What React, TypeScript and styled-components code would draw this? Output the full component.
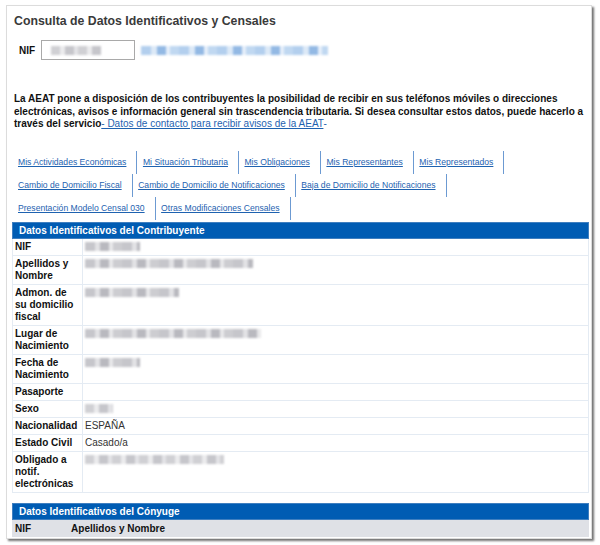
import React from 'react';
import styled, {createGlobalStyle} from 'styled-components';

const GlobalStyle = createGlobalStyle`
    html, body {
        margin: 0;
        padding: 0;
        background: #ffffff;
    }
    body {
        font-family: "Liberation Sans", Arial, sans-serif;
        color: #222222;
    }
`;

const Page = styled.div`
    padding: 5px 8px 5px 6px;
`;

const Panel = styled.div`
    height: 534px;
    box-sizing: border-box;
    background: #ffffff;
    border: 1px solid #dcdcdc;
    box-shadow: 2px 2px 2px rgba(0, 0, 0, 0.55);
    padding: 7px 2px 0 5px;
    overflow: hidden;
`;

const Title = styled.h1`
    margin: 0 0 0 2px;
    font-size: 12.3px;
    line-height: 16px;
    font-weight: 700;
    color: #3a3a3a;
`;

const NifRow = styled.div`
    display: flex;
    align-items: center;
    gap: 6px;
    margin: 11px 0 0 7px;
    height: 20px;
`;

const Label = styled.span`
    font-size: 10px;
    font-weight: 700;
    color: #111111;
`;

const Input = styled.div`
    width: 94px;
    height: 20px;
    border: 1px solid #a9a9a9;
    display: flex;
    align-items: center;
    padding-left: 9px;
    box-sizing: border-box;
`;

// pixelated stand-in for personal data that is hidden on screen
const Blur = styled.span<{$w: number; $tone?: 'grey' | 'blue' | 'light'}>`
    display: inline-block;
    width: ${(p) => p.$w}px;
    height: 9px;
    vertical-align: middle;
    filter: blur(1.3px);
    background: ${(p) => {
        if (p.$tone === 'blue') {
            return 'repeating-linear-gradient(90deg, #b3cfee 0 10px, #dce9f7 10px 16px, #93b9e4 16px 25px, #e6effa 25px 29px, #c0d8f1 29px 38px)';
        }
        if (p.$tone === 'light') {
            return 'repeating-linear-gradient(90deg, #d0d0d4 0 9px, #ebebed 9px 14px, #c6c6cb 14px 23px, #e4e4e7 23px 27px)';
        }
        return 'repeating-linear-gradient(90deg, #c6c6cb 0 10px, #e2e2e5 10px 15px, #b9b9bf 15px 24px, #e8e8ea 24px 28px, #cdcdd1 28px 37px)';
    }};
`;

const Notice = styled.p`
    margin: 33px 4px 0 2px;
    font-size: 10px;
    line-height: 12.5px;
    font-weight: 700;
    color: #111111;
`;

const NoticeLink = styled.a`
    font-weight: 400;
    color: #1e62b0;
`;

const Nav = styled.div`
    display: flex;
    flex-wrap: wrap;
    margin: 20px 0 0 6px;
    width: 540px;
`;

const NavBreak = styled.div`
    flex-basis: 100%;
    height: 0;
`;

const NavLink = styled.a<{$first?: boolean}>`
    display: flex;
    align-items: center;
    height: 23px;
    padding: 0 10px 0 ${(p) => (p.$first ? '0' : '5.5px')};
    border-right: 1px solid #6c9ad2;
    font-size: 8.6px;
    color: #1e62b0;
    text-decoration: underline;
    white-space: nowrap;
`;

const Section = styled.div`
    margin-top: 2px;
    width: 577px;
`;

const Header = styled.div`
    background: #005cb3;
    color: #ffffff;
    font-size: 10px;
    font-weight: 700;
    height: 17px;
    line-height: 15px;
    padding-left: 6px;
    border: 1px solid #3f7fc0;
    box-sizing: border-box;
`;

const Table = styled.div`
    display: grid;
    grid-template-columns: 70px 1fr;
    border-left: 1px solid #e4ebf3;
    border-right: 1px solid #e4ebf3;
`;

const Cell = styled.div<{$label?: boolean}>`
    font-size: 10px;
    line-height: 12px;
    padding: 2px;
    font-weight: ${(p) => (p.$label ? 700 : 400)};
    color: ${(p) => (p.$label ? '#111111' : '#333333')};
    border-bottom: 1px solid #e4ebf3;
    border-right: ${(p) => (p.$label ? '1px solid #e4ebf3' : 'none')};
    min-height: 12px;
`;

const SpouseSection = styled(Section)`
    margin-top: 10px;
`;

const SubHead = styled.div`
    display: flex;
    gap: 40px;
    background: #dfe1e6;
    height: 17px;
    align-items: center;
    padding-left: 3px;
    font-size: 10px;
    font-weight: 700;
    color: #111111;
`;

type Row = {
    label: string[];
    value?: string;
    blur?: number;
    tone?: 'grey' | 'light';
};

const rows: Row[] = [
    {label: ['NIF'], blur: 55},
    {label: ['Apellidos y', 'Nombre'], blur: 168},
    {label: ['Admon. de', 'su domicilio', 'fiscal'], blur: 94},
    {label: ['Lugar de', 'Nacimiento'], blur: 176},
    {label: ['Fecha de', 'Nacimiento'], blur: 55},
    {label: ['Pasaporte']},
    {label: ['Sexo'], blur: 28, tone: 'light'},
    {label: ['Nacionalidad'], value: 'ESPAÑA'},
    {label: ['Estado Civil'], value: 'Casado/a'},
    {label: ['Obligado a', 'notif.', 'electrónicas'], blur: 139, tone: 'light'},
];

const tabs = [
    ['Mis Actividades Económicas', 'Mi Situación Tributaria', 'Mis Obligaciones', 'Mis Representantes', 'Mis Representados'],
    ['Cambio de Domicilio Fiscal', 'Cambio de Domicilio de Notificaciones', 'Baja de Domicilio de Notificaciones'],
    ['Presentación Modelo Censal 030', 'Otras Modificaciones Censales'],
];

export default function App() {
    return (
        <Page>
            <GlobalStyle/>
            <Panel>
                <Title>{'Consulta de Datos Identificativos y Censales'}</Title>
                <NifRow>
                    <Label>{'NIF'}</Label>
                    <Input>
                        <Blur
                            $w={50}
                            $tone='light'
                        />
                    </Input>
                    <Blur
                        $w={187}
                        $tone='blue'
                    />
                </NifRow>
                <Notice>
                    {'La AEAT pone a disposición de los contribuyentes la posibilidad de recibir en sus teléfonos móviles o direcciones electrónicas, avisos e información general sin trascendencia tributaria. Si desea consultar estos datos, puede hacerlo a través del servicio'}
                    <NoticeLink href='#'>{'- Datos de contacto para recibir avisos de la AEAT'}</NoticeLink>
                    <NoticeLink as='span'>{'-'}</NoticeLink>
                </Notice>
                <Nav>
                    {tabs.map((line, i) => (
                        <React.Fragment key={`line_${i}`}>
                            {i > 0 && <NavBreak/>}
                            {line.map((t, j) => (
                                <NavLink
                                    key={t}
                                    href='#'
                                    $first={j === 0}
                                >
                                    {t}
                                </NavLink>
                            ))}
                        </React.Fragment>
                    ))}
                </Nav>
                <Section>
                    <Header>{'Datos Identificativos del Contribuyente'}</Header>
                    <Table>
                        {rows.map((r) => (
                            <React.Fragment key={r.label.join(' ')}>
                                <Cell $label={true}>
                                    {r.label.map((l) => <div key={l}>{l}</div>)}
                                </Cell>
                                <Cell>
                                    {r.value}
                                    {r.blur && (
                                        <Blur
                                            $w={r.blur}
                                            $tone={r.tone}
                                        />
                                    )}
                                </Cell>
                            </React.Fragment>
                        ))}
                    </Table>
                </Section>
                <SpouseSection>
                    <Header>{'Datos Identificativos del Cónyuge'}</Header>
                    <SubHead>
                        <span>{'NIF'}</span>
                        <span>{'Apellidos y Nombre'}</span>
                    </SubHead>
                </SpouseSection>
            </Panel>
        </Page>
    );
}
